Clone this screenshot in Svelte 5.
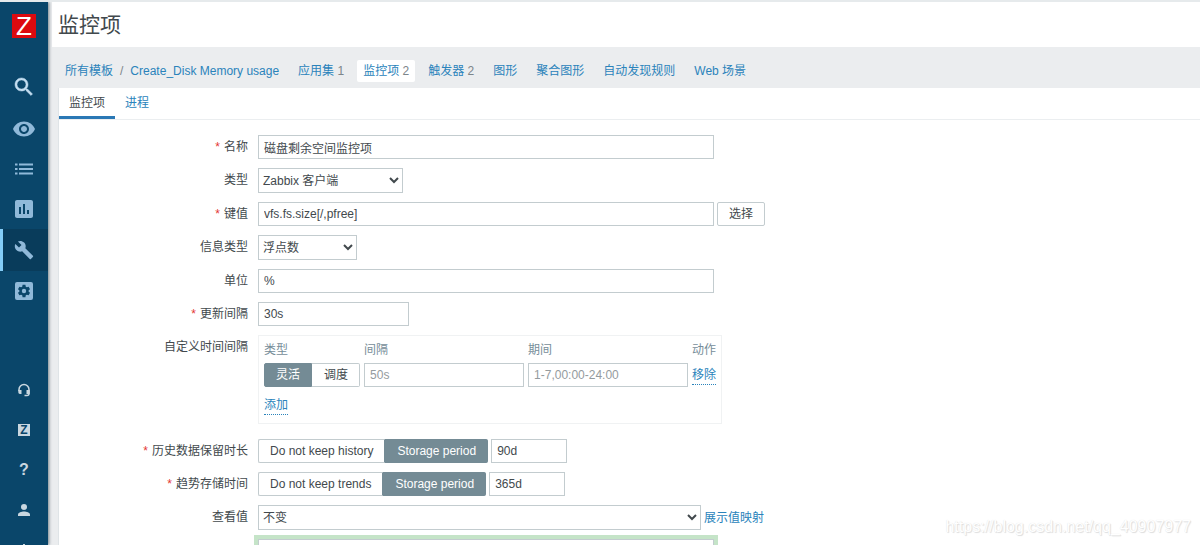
<script lang="ts">
	interface NavItem {
		label: string;
		count?: number;
		active?: boolean;
	}

	interface Icon {
		name: string;
		path: string;
		size?: number;
		active?: boolean;
	}

	const navItems: NavItem[] = [
		{ label: '应用集', count: 1 },
		{ label: '监控项', count: 2, active: true },
		{ label: '触发器', count: 2 },
		{ label: '图形' },
		{ label: '聚合图形' },
		{ label: '自动发现规则' },
		{ label: 'Web 场景' }
	];

	const menu: Icon[] = [
		{
			name: 'Monitoring',
			path: 'M12 4.5C7 4.5 2.73 7.61 1 12c1.73 4.39 6 7.5 11 7.5s9.27-3.11 11-7.5c-1.73-4.39-6-7.5-11-7.5zM12 17c-2.76 0-5-2.24-5-5s2.24-5 5-5 5 2.24 5 5-2.24 5-5 5zm0-8c-1.66 0-3 1.34-3 3s1.34 3 3 3 3-1.34 3-3-1.34-3-3-3z'
		},
		{
			name: 'Inventory',
			path: 'M3 6.500h2.500v2H3zM7 6.500h14v2H7zM3 11h2.500v2H3zM7 11h14v2H7zM3 15.500h2.500v2H3zM7 15.500h14v2H7z'
		},
		{
			name: 'Reports',
			path: 'M19 3H5c-1.100 0-2 .9-2 2v14c0 1.100.9 2 2 2h14c1.100 0 2-.9 2-2V5c0-1.100-.9-2-2-2zM9 17H7v-7h2v7zm4 0h-2V7h2v10zm4 0h-2v-4h2v4z'
		},
		{
			name: 'Configuration',
			size: 20,
			active: true,
			path: 'M22.700 19l-9.100-9.100c.9-2.300.4-5-1.500-6.900-2-2-5-2.400-7.400-1.300L9 6 6 9 1.600 4.700C.4 7.100.9 10.100 2.900 12.100c1.900 1.900 4.600 2.400 6.900 1.500l9.100 9.100c.4.4 1 .4 1.400 0l2.300-2.300c.5-.4.5-1.100.1-1.400z'
		},
		{
			name: 'Administration',
			path: 'M5 3h14a2 2 0 0 1 2 2v14a2 2 0 0 1-2 2H5a2 2 0 0 1-2-2V5a2 2 0 0 1 2-2zM10.580 5.860L13.420 5.860 13.760 7.640 14.900 8.300 16.610 7.700 18.030 10.160 16.660 11.340 16.660 12.660 18.030 13.840 16.610 16.300 14.900 15.700 13.760 16.360 13.420 18.140 10.580 18.140 10.240 16.360 9.100 15.700 7.390 16.300 5.970 13.840 7.340 12.660 7.340 11.340 5.970 10.160 7.390 7.700 9.100 8.300 10.240 7.640zM12 9.800a2.200 2.200 0 1 1 0 4.400a2.200 2.200 0 1 1 0-4.400z'
		}
	];

	let name = $state('磁盘剩余空间监控项');
	let key = $state('vfs.fs.size[/,pfree]');
	let units = $state('%');
	let delay = $state('30s');
	let intervalType = $state('灵活');
	let historyMode = $state('Storage period');
	let history = $state('90d');
	let trendsMode = $state('Storage period');
	let trends = $state('365d');
</script>

{#snippet segmented(group: string, options: string[], value: string, onpick: (v: string) => void)}
	<div class="segmented" role="radiogroup" aria-label={group}>
		{#each options as option}
			<label class:checked={option === value}>
				<input
					type="radio"
					name={group}
					value={option}
					checked={option === value}
					onchange={() => onpick(option)}
				/>
				{option}
			</label>
		{/each}
	</div>
{/snippet}

<div class="wrapper">
	<aside class="sidebar">
		<a class="logo" href="#home">Z</a>

		<nav class="menu">
			<button class="search" aria-label="Search">
				<svg viewBox="0 0 24 24" width="24" height="24" fill="currentColor">
					<path
						d="M15.500 14h-.79l-.28-.27C15.410 12.590 16 11.110 16 9.500 16 5.910 13.090 3 9.500 3S3 5.910 3 9.500 5.910 16 9.500 16c1.610 0 3.090-.59 4.230-1.570l.27.28v.79l5 4.990L20.490 19l-4.990-5zm-6 0C7.010 14 5 11.990 5 9.500S7.010 5 9.500 5 14 7.010 14 9.500 11.990 14 9.500 14z"
						stroke="currentColor"
						stroke-width="0.5"
					/>
				</svg>
			</button>
			{#each menu as item}
				<a href="#{item.name}" class:active={item.active} aria-label={item.name}>
					<svg
						viewBox="0 0 24 24"
						width={item.size ?? 24}
						height={item.size ?? 24}
						fill="currentColor"
						fill-rule="evenodd"
					>
						<path d={item.path} />
					</svg>
				</a>
			{/each}
		</nav>

		<nav class="menu user-menu">
			<a href="#support" aria-label="Support">
				<svg viewBox="0 0 14 14" width="14" height="14">
					<path
						d="M2 8V6.500a5 5 0 0 1 10 0V10.500a2 2 0 0 1-2 2H7.500"
						fill="none"
						stroke="currentColor"
						stroke-width="1.5"
					/>
					<path d="M1.300 7H4.500v4H3a1.700 1.700 0 0 1-1.700-1.700zM9.500 7h3.200v4H9.500z" fill="currentColor" />
				</svg>
			</a>
			<a href="#share" aria-label="Share"><span class="share">Z</span></a>
			<a href="#help" class="help">?</a>
			<a href="#profile" aria-label="Profile">
				<svg viewBox="0 0 14 14" width="14" height="14" fill="currentColor">
					<circle cx="7" cy="4" r="3" />
					<path d="M1 13v-1.500C1 9.500 4.500 8.500 7 8.500s6 1 6 3V13z" />
				</svg>
			</a>
			<a href="#signout" aria-label="Sign out">
				<svg viewBox="0 0 14 14" width="14" height="14" fill="none" stroke="currentColor">
					<path d="M7 1v6M4 3a5 5 0 1 0 6 0" stroke-width="2" />
				</svg>
			</a>
		</nav>
	</aside>

	<main>
		<header><h1>监控项</h1></header>

		<nav class="breadcrumbs">
			<div class="trail">
				<a href="#templates">所有模板</a>
				<span>/</span>
				<a href="#template">Create_Disk Memory usage</a>
			</div>
			{#each navItems as item}
				<span class="crumb" class:selected={item.active}>
					<a href="#{item.label}">{item.label}</a>
					{#if item.count}<span>{item.count}</span>{/if}
				</span>
			{/each}
		</nav>

		<section class="content">
			<div class="tabs">
				<a class="current" href="#item">监控项</a>
				<a href="#steps">进程</a>
			</div>

			<form>
				<label class="required" for="name">名称</label>
				<div class="field"><input class="wide" id="name" bind:value={name} /></div>

				<label for="type">类型</label>
				<div class="field">
					<select class="type" id="type"><option>Zabbix 客户端</option></select>
				</div>

				<label class="required" for="key">键值</label>
				<div class="field">
					<input class="wide" id="key" bind:value={key} />
					<button type="button" class="select-key">选择</button>
				</div>

				<label for="value-type">信息类型</label>
				<div class="field">
					<select class="value-type" id="value-type"><option>浮点数</option></select>
				</div>

				<label for="units">单位</label>
				<div class="field"><input class="wide" id="units" bind:value={units} /></div>

				<label class="required" for="delay">更新间隔</label>
				<div class="field"><input class="medium" id="delay" bind:value={delay} /></div>

				<span class="label">自定义时间间隔</span>
				<div class="intervals">
					<table>
						<thead>
							<tr><th>类型</th><th>间隔</th><th>期间</th><th>动作</th></tr>
						</thead>
						<tbody>
							<tr>
								<td>
									{@render segmented('interval', ['灵活', '调度'], intervalType, (v) => (intervalType = v))}
								</td>
								<td><input class="cell" aria-label="间隔" placeholder="50s" /></td>
								<td><input class="cell" aria-label="期间" placeholder="1-7,00:00-24:00" /></td>
								<td><button type="button" class="link">移除</button></td>
							</tr>
						</tbody>
					</table>
					<button type="button" class="link">添加</button>
				</div>

				<label class="required" for="history">历史数据保留时长</label>
				<div class="field">
					{@render segmented('history', ['Do not keep history', 'Storage period'], historyMode, (v) => (historyMode = v))}
					<input class="small" id="history" bind:value={history} />
				</div>

				<label class="required" for="trends">趋势存储时间</label>
				<div class="field">
					{@render segmented('trends', ['Do not keep trends', 'Storage period'], trendsMode, (v) => (trendsMode = v))}
					<input class="small" id="trends" bind:value={trends} />
				</div>

				<label for="valuemap">查看值</label>
				<div class="field">
					<select class="valuemap" id="valuemap"><option>不变</option></select>
					<a href="#valuemaps">展示值映射</a>
				</div>

				<span></span>
				<div class="field"><input class="wide focused" aria-label="新的应用集" /></div>
			</form>
		</section>
	</main>

	<div class="watermark">https://blog.csdn.net/qq_40907977</div>
</div>

<style>
	:global(body) {
		background: #ebedef;
		color: #42494d;
		font-family: 'Liberation Sans', 'Noto Sans CJK SC', sans-serif;
		font-size: 12px;
		line-height: 18px;
	}

	.wrapper {
		border-top: 2px solid #e6eaec;
		box-sizing: border-box;
		display: flex;
		height: 100vh;
		overflow: hidden;
		position: relative;
	}

	a {
		color: #2a83bb;
		text-decoration: none;
	}

	button,
	input,
	select {
		box-sizing: border-box;
		color: inherit;
		font: inherit;
		margin: 0;
	}

	/* sidebar */
	.sidebar {
		background: #0a466a;
		box-shadow: 1px 0 3px rgba(40, 60, 70, 0.6);
		display: flex;
		flex-direction: column;
		flex-shrink: 0;
		width: 48px;
		z-index: 1;
	}

	.logo {
		align-self: center;
		background: #dc0a0f;
		color: #fff;
		font-size: 26px;
		height: 24px;
		line-height: 24px;
		margin: 12px 0 28px;
		text-align: center;
		width: 24px;
	}

	.menu {
		display: flex;
		flex-direction: column;
		flex-shrink: 0;
	}

	.menu a,
	.search {
		align-items: center;
		background: none;
		border: 0;
		border-left: 3px solid transparent;
		border-right: 3px solid transparent;
		box-sizing: border-box;
		color: #90b9d9;
		display: flex;
		height: 40px;
		justify-content: center;
		padding: 0;
	}

	.menu .search {
		color: #c3ddf0;
		height: 42px;
		margin-bottom: 1px;
	}

	.menu .active {
		background: #093c5b;
		border-left-color: #84cdf7;
		border-right-color: #093c5b;
		height: 42px;
	}

	.user-menu {
		margin-top: 59px;
	}

	.user-menu a {
		color: #c9d7e0;
	}

	.share {
		background: #c9d7e0;
		color: #0a466a;
		font-size: 12px;
		font-weight: 700;
		height: 12px;
		line-height: 12px;
		text-align: center;
		width: 12px;
	}

	.user-menu .help {
		font-size: 16px;
		font-weight: 700;
	}

	/* header */
	main {
		flex: 1;
		min-width: 0;
	}

	header {
		background: #fff;
		margin-left: 4px;
		padding: 8px 6px;
	}

	h1 {
		font-size: 21px;
		font-weight: 400;
		line-height: 29px;
		margin: 0;
	}

	.breadcrumbs {
		align-items: center;
		box-sizing: border-box;
		color: #7c858a;
		display: flex;
		gap: 7px;
		height: 41px;
		padding: 6px 17px 0;
		white-space: nowrap;
	}

	.trail {
		display: flex;
		gap: 7px;
		padding-right: 6px;
	}

	.crumb {
		border-radius: 2px;
		padding: 2px 6px;
	}

	.selected {
		background: #fff;
	}

	.content {
		background: #fff;
		border-left: 1px solid #dfe4e7;
		margin-left: 10px;
	}

	.tabs {
		border-bottom: 1px solid #ebeef0;
		display: flex;
	}

	.tabs a {
		border-bottom: 3px solid transparent;
		padding: 6px 10px 4px;
	}

	.tabs .current {
		border-color: #2a78b5;
		color: inherit;
	}

	/* form */
	form {
		column-gap: 10px;
		display: grid;
		grid-template-columns: 189px 1fr;
		padding-top: 15px;
		row-gap: 9px;
	}

	form > label,
	.label {
		line-height: 25px;
		max-height: 24px;
		text-align: right;
	}

	.required::before {
		color: #e33734;
		content: '*';
		margin-right: 4px;
	}

	.field {
		align-items: center;
		display: flex;
		gap: 3px;
	}

	input {
		background: #fff;
		border: 1px solid #c3cccf;
		height: 24px;
		padding: 0 5px;
	}

	input::placeholder {
		color: #949b9e;
	}

	select {
		background: #fff;
		border: 1px solid #c3cccf;
		border-radius: 0;
		height: 25px;
	}

	.wide {
		width: 456px;
	}

	.medium {
		width: 151px;
	}

	.small {
		width: 76px;
	}

	.cell {
		width: 160px;
	}

	.type {
		width: 145px;
	}

	.value-type {
		width: 99px;
	}

	.valuemap {
		width: 443px;
	}

	.select-key {
		background: #fff;
		border: 1px solid #c3cccf;
		border-radius: 2px;
		height: 24px;
		padding: 0 11px;
	}

	.segmented {
		display: flex;
	}

	.segmented label {
		border: 1px solid #c3cccf;
		line-height: 22px;
		padding: 0 11px;
		white-space: nowrap;
	}

	.segmented label:first-child {
		border-radius: 2px 0 0 2px;
		border-right-color: #748b95;
	}

	.segmented label:last-child {
		border-left: 0;
		border-radius: 0 2px 2px 0;
		padding-left: 12px;
	}

	.segmented .checked {
		background: #748b95;
		border-color: #748b95;
		color: #fff;
	}

	.segmented input {
		appearance: none;
		border: 0;
		height: 0;
		opacity: 0;
		padding: 0;
		position: absolute;
		width: 0;
	}

	.intervals {
		border: 1px solid #f0f2f3;
		box-sizing: border-box;
		height: 89px;
		justify-self: start;
		margin-bottom: 6px;
		padding: 5px;
	}

	table {
		border-collapse: collapse;
		margin-bottom: 9px;
	}

	th {
		color: #768d99;
		font-weight: 400;
		padding: 0 4px 4px 0;
		text-align: left;
	}

	td {
		padding: 0 4px 0 0;
	}

	th:last-child,
	td:last-child {
		padding-right: 0;
	}

	td .cell {
		display: block;
	}

	.link {
		background: none;
		border: 0;
		border-bottom: 1px dotted #2a83bb;
		color: #2a83bb;
		line-height: 17px;
		padding: 0;
	}

	.focused {
		box-shadow: 0 0 0 4px #c5e4c8;
	}

	.watermark {
		bottom: 9px;
		color: #fff;
		font-size: 16px;
		position: absolute;
		right: 9px;
		text-shadow: 1px 1px 1px #dcdcdc, 0 0 1px #dedede;
	}
</style>
